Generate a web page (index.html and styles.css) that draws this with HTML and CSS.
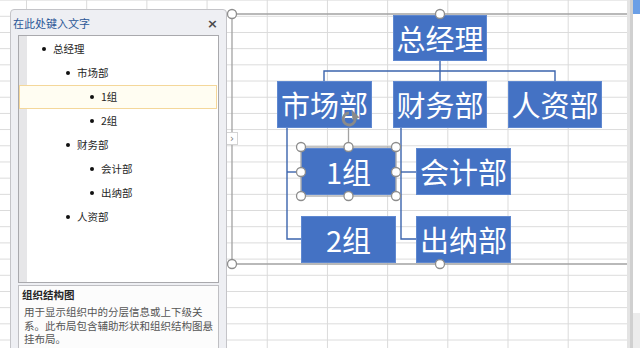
FILE: index.html
```html
<!DOCTYPE html>
<html lang="zh-CN">
<head>
<meta charset="utf-8">
<title>SmartArt 文本窗格</title>
<link rel="stylesheet" href="styles.css">
</head>
<body>
<div class="screen">
  <div class="sheet">
    <div class="pane">
      <div class="pane-head">
        <span class="pane-title">在此处键入文字</span>
        <span class="pane-close">×</span>
      </div>
      <div class="pane-list">
        <ul class="outline">
          <li class="lv1">总经理</li>
          <li class="lv2">市场部</li>
          <li class="lv3 sel">1组</li>
          <li class="lv3">2组</li>
          <li class="lv2">财务部</li>
          <li class="lv3">会计部</li>
          <li class="lv3">出纳部</li>
          <li class="lv2">人资部</li>
        </ul>
      </div>
      <div class="pane-desc">
        <div class="desc-title">组织结构图</div>
        <p class="desc-text">用于显示组织中的分层信息或上下级关系。此布局包含辅助形状和组织结构图悬挂布局。</p>
      </div>
    </div>
    <div class="pane-tab">›</div>

    <svg class="lines" width="627" height="348" viewBox="0 0 627 348">
      <path class="frame" d="M640 14 H232 V264 H640"/>
      <g class="conn">
        <path d="M440 61 V71"/>
        <path d="M324 81 V71 H555 V81"/>
        <path d="M440 71 V81"/>
        <path d="M287 128 V239 H301"/>
        <path d="M287 172 H301"/>
        <path d="M401 128 V239 H416"/>
        <path d="M396 172 H416"/>
      </g>
      <path class="frame" d="M348.5 126 V147"/>
    </svg>

    <div class="node n-ceo">总经理</div>
    <div class="node n-mkt">市场部</div>
    <div class="node n-fin">财务部</div>
    <div class="node n-hr">人资部</div>
    <div class="node n-g1">1组</div>
    <div class="node n-g2">2组</div>
    <div class="node n-acc">会计部</div>
    <div class="node n-cash">出纳部</div>

    <svg class="handles" width="627" height="348" viewBox="0 0 627 348">
      <rect class="selbox" x="301" y="147" width="95" height="49"/>
      <g class="knob">
        <circle cx="232" cy="14" r="4.5"/>
        <circle cx="440" cy="14" r="4.5"/>
        <circle cx="232" cy="264" r="4.5"/>
        <circle cx="440" cy="264" r="4.5"/>
        <circle cx="301" cy="147" r="4.5"/>
        <circle cx="348.5" cy="147" r="4.5"/>
        <circle cx="396" cy="147" r="4.5"/>
        <circle cx="301" cy="172" r="4.5"/>
        <circle cx="396" cy="172" r="4.5"/>
        <circle cx="301" cy="196" r="4.5"/>
        <circle cx="348.5" cy="196" r="4.5"/>
        <circle cx="396" cy="196" r="4.5"/>
      </g>
      <g class="rotate">
        <path d="M354.8 117 A6 6 0 1 1 349 113"/>
        <path class="rot-head" d="M351.5 109.5 L359.5 117.5 L352.5 120 Z"/>
      </g>
    </svg>
  </div>
  <div class="vbar"></div>
  <div class="edge">
    <div class="edge-top"></div>
    <div class="edge-mid"></div>
    <div class="edge-bottom"></div>
  </div>
</div>
</body>
</html>
```

FILE: styles.css
```css
html, body {
  margin: 0;
  padding: 0;
  width: 640px;
  height: 348px;
  overflow: hidden;
  background: #ffffff;
  font-family: "Noto Sans CJK SC", "Noto Sans", sans-serif;
}

.screen {
  display: flex;
  width: 640px;
  height: 348px;
}

.sheet {
  position: relative;
  width: 627px;
  height: 348px;
  flex: none;
  overflow: hidden;
  background-color: #ffffff;
  background-image:
    linear-gradient(to right, #dadada 1px, transparent 1px),
    linear-gradient(to bottom, #dadada 1px, transparent 1px);
  background-size: 60.2px 100%, 100% 16.2px;
  background-position: 26px 0, 0 15.8px;
}

/* ---------- text pane ---------- */
.pane {
  position: absolute;
  left: 10px;
  top: 9px;
  width: 217px;
  height: 360px;
  box-sizing: border-box;
  background: #eeeff3;
  border: 1px solid #c4c4c8;
  border-radius: 4px 4px 0 0;
  padding: 0 7px;
  display: flex;
  flex-direction: column;
  z-index: 4;
}

.pane-head {
  height: 25px;
  display: flex;
  align-items: center;
  justify-content: space-between;
  margin: 0 -7px;
  padding: 0 7px 0 2px;
}

.pane-title {
  font-family: "Liberation Serif", "Noto Sans CJK SC", serif;
  font-size: 11px;
  color: #2b5797;
  margin-top: 1px;
}

.pane-close {
  font-family: "DejaVu Sans", sans-serif;
  font-size: 13px;
  font-weight: bold;
  color: #4a4a4a;
  margin-top: 1px;
  margin-right: 1px;
}

.pane-list {
  height: 248px;
  flex: none;
  box-sizing: border-box;
  border: 1px solid #a9a9ad;
  background: linear-gradient(to right, #e6e6e8 8px, #ffffff 8px);
  padding-top: 1px;
}

.outline {
  list-style: none;
  margin: 0;
  padding: 0;
}

.outline li {
  height: 24px;
  box-sizing: border-box;
  display: flex;
  align-items: center;
  font-size: 10.5px;
  color: #262626;
  line-height: 1;
}

.outline li::before {
  content: "";
  width: 4px;
  height: 4px;
  border-radius: 50%;
  background: #111111;
  margin-right: 7px;
  flex: none;
}

.outline .lv1 { padding-left: 23px; }
.outline .lv2 { padding-left: 47px; }
.outline .lv3 { padding-left: 71px; }

.outline .sel {
  background: #fffdf2;
  border: 1px solid #f4d79a;
  padding-left: 70px;
  margin-right: 1px;
}

.pane-desc {
  margin-top: 2px;
  flex: 1;
  box-sizing: border-box;
  border: 1px solid #bfbfc3;
  background: #fcfcfc;
  padding: 2px 4px 0 3px;
}

.desc-title {
  font-size: 10.5px;
  font-weight: bold;
  color: #262626;
  line-height: 14px;
}

.desc-text {
  margin: 3px 0 0 2px;
  font-size: 10.5px;
  line-height: 13.5px;
  color: #555555;
}

.pane-tab {
  position: absolute;
  left: 227px;
  top: 132px;
  width: 11px;
  height: 13px;
  box-sizing: border-box;
  background: #ffffff;
  border: 1px solid #d4d4d4;
  border-left: none;
  font-family: "DejaVu Sans", sans-serif;
  font-size: 10px;
  line-height: 11px;
  color: #7a7a7a;
  text-align: center;
  z-index: 5;
}

/* ---------- diagram ---------- */
.lines, .handles {
  position: absolute;
  left: 0;
  top: 0;
}
.lines { z-index: 1; }
.handles { z-index: 3; }

.frame {
  fill: none;
  stroke: #a3a3a3;
  stroke-width: 1.3;
}

.conn path {
  fill: none;
  stroke: #3b64ad;
  stroke-width: 1.4;
}

.selbox {
  fill: none;
  stroke: #a8a8a8;
  stroke-width: 1.3;
}

.knob circle {
  fill: #ffffff;
  stroke: #8d8d8d;
  stroke-width: 1.3;
}

.rotate path {
  fill: none;
  stroke: #8a8a8a;
  stroke-width: 2.8;
}
.rotate .rot-head {
  fill: #8a8a8a;
  stroke: none;
}

.node {
  position: absolute;
  box-sizing: border-box;
  width: 95px;
  height: 47px;
  background: #4472c4;
  border: 1px solid #5f88d0;
  color: #ffffff;
  font-size: 29px;
  line-height: 1;
  display: flex;
  align-items: center;
  justify-content: center;
  white-space: nowrap;
  z-index: 2;
}

.n-ceo  { left: 393px; top: 15px; width: 94px; height: 46px; }
.n-mkt  { left: 277px; top: 81px; }
.n-fin  { left: 393px; top: 81px; width: 94px; }
.n-hr   { left: 508px; top: 81px; width: 94px; }
.n-g1   { left: 301px; top: 148px; }
.n-g2   { left: 301px; top: 216px; }
.n-acc  { left: 416px; top: 148px; }
.n-cash { left: 416px; top: 216px; }

/* ---------- right edge ---------- */
.vbar {
  width: 6px;
  flex: none;
  background: linear-gradient(to right, #e4e4e4 0, #e4e4e4 3px, #d0d0d0 3px);
}

.edge {
  width: 7px;
  flex: none;
  display: flex;
  flex-direction: column;
}
.edge-top {
  height: 14px;
  background: #6b9fe6;
}
.edge-mid {
  flex: 1;
  background: #ffffff;
}
.edge-bottom {
  height: 35px;
  background: #ececec;
}
```
